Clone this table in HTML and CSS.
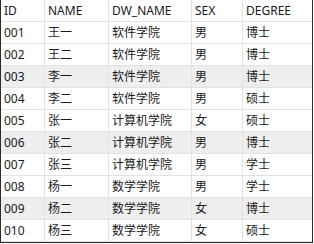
FILE: index.html
```html
<!DOCTYPE html>
<html>
<head>
<meta charset="utf-8">
<link rel="stylesheet" href="styles.css">
</head>
<body>
<div class="grid">
  <table class="data">
    <colgroup>
      <col class="c1"><col class="c2"><col class="c3"><col class="c4"><col class="c5">
    </colgroup>
    <thead>
      <tr><th>ID</th><th>NAME</th><th>DW_NAME</th><th>SEX</th><th>DEGREE</th></tr>
    </thead>
    <tbody>
      <tr><td>001</td><td>王一</td><td>软件学院</td><td>男</td><td>博士</td></tr>
      <tr><td>002</td><td>王二</td><td>软件学院</td><td>男</td><td>博士</td></tr>
      <tr class="alt"><td>003</td><td>李一</td><td>软件学院</td><td>男</td><td>博士</td></tr>
      <tr><td>004</td><td>李二</td><td>软件学院</td><td>男</td><td>硕士</td></tr>
      <tr><td>005</td><td>张一</td><td>计算机学院</td><td>女</td><td>硕士</td></tr>
      <tr class="alt"><td>006</td><td>张二</td><td>计算机学院</td><td>男</td><td>博士</td></tr>
      <tr><td>007</td><td>张三</td><td>计算机学院</td><td>男</td><td>学士</td></tr>
      <tr><td>008</td><td>杨一</td><td>数学学院</td><td>男</td><td>学士</td></tr>
      <tr class="alt"><td>009</td><td>杨二</td><td>数学学院</td><td>女</td><td>博士</td></tr>
      <tr><td>010</td><td>杨三</td><td>数学学院</td><td>女</td><td>硕士</td></tr>
    </tbody>
  </table>
</div>
</body>
</html>
```
FILE: styles.css
```css
html, body {
  margin: 0;
  padding: 0;
  background: #fff;
}
.grid {
  width: 311px;
  border-left: 1px solid #2b2b2b;
  border-right: 1px solid #2b2b2b;
  border-bottom: 1px solid #2b2b2b;
}
.data {
  width: 311px;
  table-layout: fixed;
  border-collapse: separate;
  border-spacing: 0;
  font-family: "Noto Sans", "Noto Sans CJK SC", sans-serif;
  font-size: 12px;
  color: #1a1a1a;
}
.c1 { width: 44px; }
.c2 { width: 64px; }
.c3 { width: 83px; }
.c4 { width: 51px; }
.c5 { width: 69px; }
.data th, .data td {
  height: 21px;
  padding: 0 0 0 3px;
  text-align: left;
  font-weight: normal;
  white-space: nowrap;
  overflow: hidden;
  border-right: 1px solid #e2e2e2;
  border-bottom: 1px solid #e2e2e2;
  line-height: 21px;
  box-sizing: border-box;
}
.data th:last-child, .data td:last-child {
  border-right: none;
}
.data tr {
  height: 22px;
}
.data th, .data td {
  height: 22px;
}
.data tr.alt td {
  background: #eeeeee;
}
```
